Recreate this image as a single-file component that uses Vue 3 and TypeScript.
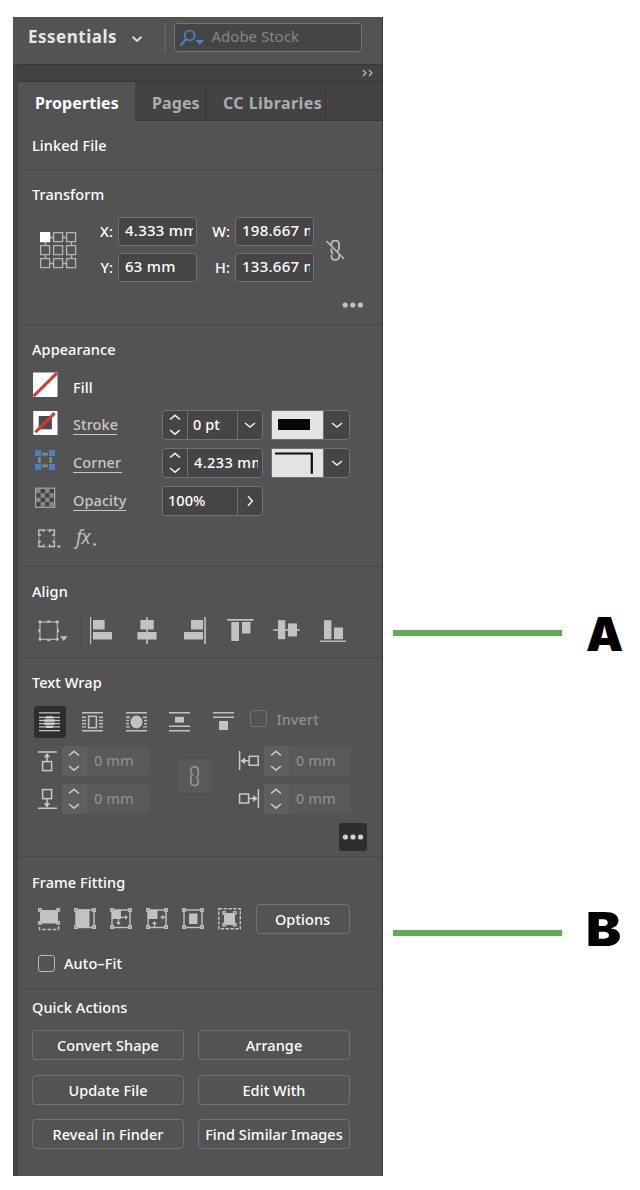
<script setup lang="ts">
interface Segment { x: number; y: number; w: number; h: number }
interface AlignIcon { id: string; box: string; rects: Segment[] }

const refCols: number[] = [0.5, 13.5, 26.5]
const refRows: number[] = [0.5, 13.5, 26.5]
const checks: number[] = [0, 1, 2, 3]

const alignIcons: AlignIcon[] = [
  { id: 'left', box: '87 616 28 30', rects: [{ x: 90, y: 617, w: 1.2, h: 27 }, { x: 93, y: 620, w: 11.6, h: 9.5 }, { x: 93, y: 632, w: 19, h: 7.5 }] },
  { id: 'center', box: '133 616 28 30', rects: [{ x: 146.2, y: 617, w: 1.6, h: 27 }, { x: 140.4, y: 620, w: 13.4, h: 9.5 }, { x: 137.4, y: 632, w: 19.2, h: 7.5 }] },
  { id: 'right', box: '180 616 28 30', rects: [{ x: 204.2, y: 617, w: 1.6, h: 27 }, { x: 191, y: 620, w: 12, h: 9.5 }, { x: 184, y: 632, w: 19, h: 7.5 }] },
  { id: 'top', box: '226 616 28 30', rects: [{ x: 227, y: 619, w: 26.5, h: 1.7 }, { x: 231.3, y: 622, w: 7.7, h: 19 }, { x: 242, y: 622, w: 8.5, h: 11.5 }] },
  { id: 'middle', box: '273 616 28 30', rects: [{ x: 273.2, y: 629.2, w: 26.5, h: 1.6 }, { x: 278, y: 620.2, w: 7.2, h: 19 }, { x: 288, y: 623.4, w: 9, h: 13 }] },
  { id: 'bottom', box: '319 616 28 30', rects: [{ x: 320, y: 640.5, w: 26, h: 1.4 }, { x: 324, y: 620.2, w: 7.4, h: 19 }, { x: 334, y: 627.5, w: 9, h: 11.7 }] },
]

const actions: string[] = ['Convert Shape', 'Arrange', 'Update File', 'Edit With', 'Reveal in Finder', 'Find Similar Images']
const corners: number[][] = [[1, 1], [19, 1], [1, 18], [19, 18]]
</script>

<template>
  <div class="page">
    <div class="panel">
      <header class="topbar">
        <span class="workspace">Essentials</span>
        <svg class="ws-chev" width="12" height="8" viewBox="0 0 12 8"><path d="M1.5 1.8 6 5.9l4.5-4.1" fill="none" stroke="#dcdcdc" stroke-width="1.9" /></svg>
        <i class="vline"></i>
        <div class="search">
          <svg width="26" height="18" viewBox="179 28 26 18"><circle cx="189.7" cy="34.4" r="4.9" fill="none" stroke="#4a83cb" stroke-width="1.7" /><path d="m186.3 38-6 6.5" stroke="#4a83cb" stroke-width="2" /><path d="M195.3 39h9l-4.5 4.7z" fill="#4a83cb" /></svg>
          <span>Adobe Stock</span>
        </div>
      </header>
      <div class="body">
        <div class="strip"><svg width="11" height="8" viewBox="0 0 11 8"><path d="m1 1 3 3-3 3M7 1l3 3-3 3" fill="none" stroke="#c6c6c6" stroke-width="1.1" /></svg></div>
        <nav class="tabs">
          <span class="tab t1">Properties</span><span class="tab t2">Pages</span><span class="tab t3">CC Libraries</span><span class="tab t4"></span>
        </nav>

        <section class="linked"><h2>Linked File</h2></section>

        <section class="transform">
          <h2>Transform</h2>
          <div class="tf-row">
            <svg class="ref" width="37" height="38" viewBox="0 0 37 38">
              <path d="M10 5.5h4M23 5.5h4M10 31.5h4M23 31.5h4M5.5 10v4M5.5 23v4M31.5 10v4M31.5 23v4" stroke="#b5b5b5" stroke-width="1.3" />
              <template v-for="(y, r) in refRows" :key="y">
                <rect v-for="(x, c) in refCols" :key="x" :x="x + 0.1" :y="y + 0.1" width="9" height="9" :fill="r + c === 0 ? '#fff' : 'none'" :stroke="r + c === 0 ? '#fff' : '#b5b5b5'" stroke-width="1.3" />
              </template>
            </svg>
            <div class="tf-grid">
              <label>X:</label><div class="field"><span>4.333 mm</span></div><label class="l2">W:</label><div class="field"><span>198.667 mm</span></div>
              <label>Y:</label><div class="field"><span>63 mm</span></div><label class="l2">H:</label><div class="field"><span>133.667 mm</span></div>
            </div>
            <svg class="unlink" width="20" height="22" viewBox="325 239 20 22"><path d="M331.5 245.3v-1.5c0-4.2 7.5-4.2 7.5 0v4.7c0 1.6-.8 2.3-1.8 2.6M331.5 248.6v3.2c0 1 .7 1.8 1.6 2.2M331.5 254.9v1.9c0 4.2 7.5 4.2 7.5 0v-2" fill="none" stroke="#bcbcbc" stroke-width="1.8" /><path d="m326.5 241 17.5 18" stroke="#c0c0c0" stroke-width="1.5" /></svg>
          </div>
          <svg class="dots" width="22" height="6" viewBox="0 0 22 6"><circle v-for="x in [3.2, 10.8, 18.4]" :key="x" :cx="x" cy="3" r="2.6" fill="#c2c2c2" /></svg>
        </section>

        <section class="appearance">
          <h2>Appearance</h2>
          <div class="ap-row">
            <svg class="ap-ico" width="28" height="30" viewBox="31 370 28 30"><rect x="33" y="372.5" width="24.5" height="24.5" fill="#fff" /><path d="m33.5 396.3 23.4-23.2" stroke="#dc3533" stroke-width="3" /></svg>
            <span class="name">Fill</span>
          </div>
          <div class="ap-row">
            <svg class="ap-ico" width="28" height="30" viewBox="31 408 28 30"><rect x="33.3" y="411" width="24.2" height="24" fill="#fff" /><rect x="38.7" y="416" width="13.2" height="13.3" fill="#4c4c4c" /><path d="m35.3 432.3 19.4-19.2" stroke="#dc3533" stroke-width="3" /></svg>
            <span class="name link n-stroke">Stroke</span>
            <div class="combo c1">
              <div class="spin"><svg width="12" height="22" viewBox="0 0 12 22"><path d="m1 5.5 5-4.2 5 4.2M1 16l5 4.2L11 16" fill="none" stroke="#ededed" stroke-width="1.6" /></svg></div>
              <div class="val">0 pt</div>
              <div class="drop"><svg width="12" height="8" viewBox="0 0 12 8"><path d="m1 2 5 4 5-4" fill="none" stroke="#ededed" stroke-width="1.6" /></svg></div>
            </div>
            <div class="combo c2"><div class="swatch"><i class="solid"></i></div><div class="drop"><svg width="12" height="8" viewBox="0 0 12 8"><path d="m1 2 5 4 5-4" fill="none" stroke="#ededed" stroke-width="1.6" /></svg></div></div>
          </div>
          <div class="ap-row">
            <svg class="ap-ico" width="28" height="30" viewBox="31 445 28 30"><g fill="#4d80c4"><rect x="35" y="450" width="6" height="6" /><rect x="49" y="450" width="6" height="6" /><rect x="35" y="464" width="6" height="6" /><rect x="49" y="464" width="6" height="6" /></g><path d="M42 454.1h6M42 465.9h6M39.4 457v6M50.7 457v6" stroke="#858585" stroke-width="2.7" /></svg>
            <span class="name link n-corner">Corner</span>
            <div class="combo c1">
              <div class="spin"><svg width="12" height="22" viewBox="0 0 12 22"><path d="m1 5.5 5-4.2 5 4.2M1 16l5 4.2L11 16" fill="none" stroke="#ededed" stroke-width="1.6" /></svg></div>
              <div class="val wide"><span>4.233 mm</span></div>
            </div>
            <div class="combo c2"><div class="swatch"><svg width="51" height="27" viewBox="0 0 51 27"><path d="M3 4.5h36.8v20.2" fill="none" stroke="#0a0b0a" stroke-width="2.2" /></svg></div><div class="drop"><svg width="12" height="8" viewBox="0 0 12 8"><path d="m1 2 5 4 5-4" fill="none" stroke="#ededed" stroke-width="1.6" /></svg></div></div>
          </div>
          <div class="ap-row">
            <svg class="ap-ico" width="28" height="30" viewBox="31 483 28 30"><rect x="35.6" y="488.2" width="19" height="19" fill="#454545" stroke="#aaa" stroke-width="1.2" /><template v-for="r in checks" :key="r"><template v-for="c in checks" :key="c"><rect v-if="(r + c) % 2 === 0" :x="36.2 + c * 4.4" :y="488.8 + r * 4.4" width="4.4" height="4.4" fill="#888" /></template></template></svg>
            <span class="name link n-opacity">Opacity</span>
            <div class="combo c1 opacity"><div class="val pct">100%</div><div class="drop"><svg width="8" height="12" viewBox="0 0 8 12"><path d="m2 1.2 4.3 4.8L2 10.8" fill="none" stroke="#ededed" stroke-width="1.6" /></svg></div></div>
          </div>
          <div class="fxrow">
            <svg width="26" height="24" viewBox="37 526 26 24"><rect x="38.8" y="530" width="15.6" height="16.6" fill="none" stroke="#c4c4c4" stroke-width="1.4" /><path d="M43.6 530v2M49.6 530v2M43.6 544.6v2M49.6 544.6v2M39 535h2M39 541.5h2M52.2 535h2M52.2 541.5h2" stroke="#c4c4c4" stroke-width="1.5" /><path d="M38.8 536v4.5M54.4 536v4.5M44.6 530h4M44.6 546.6h4" stroke="#6a6a6a" stroke-width="1.4" /><path d="M56.7 545.5h4.4l-2.2 2.7z" fill="#c4c4c4" /></svg>
            <em>fx</em>
            <svg width="6" height="4" viewBox="0 0 6 4"><path d="M.5.5h4.4L2.7 3.2z" fill="#c4c4c4" /></svg>
          </div>
        </section>

        <section class="align">
          <h2>Align</h2>
          <div class="al-row">
            <svg width="34" height="30" viewBox="37 616 34 30"><rect x="41" y="622" width="17.3" height="17.3" fill="none" stroke="#bdbdbd" stroke-width="1.1" /><path d="M39.5 622h3M56.8 622h3M39.5 639.3h3M56.8 639.3h3M41 620.4v3M58.3 620.4v3M41 637.8v3M58.3 637.8v3M48 621.5h3.2M48 640h3.2M40.3 629v3.2M59 629v3.2" stroke="#c2c2c2" stroke-width="1.8" /><path d="M61.2 636.2h7.3l-3.7 4.7z" fill="#c2c2c2" /></svg>
            <i class="al-sep"></i>
            <svg v-for="icon in alignIcons" :key="icon.id" class="al-ico" width="28" height="30" :viewBox="icon.box"><rect v-for="(s, i) in icon.rects" :key="i" :x="s.x" :y="s.y" :width="s.w" :height="s.h" fill="#c2c2c2" /></svg>
          </div>
        </section>

        <section class="wrap">
          <h2>Text Wrap</h2>
          <div class="wr-row">
            <div class="wr on"><svg width="21" height="22" viewBox="0 0 21 22"><path d="M0 1.8h21M0 6.3h21M0 9.5h21M0 12.7h21M0 15.9h21M0 19.7h21" stroke="#c9c9c9" stroke-width="1.3" /><ellipse cx="10.5" cy="11" rx="5.5" ry="6.2" fill="#c9c9c9" opacity=".35" /><path d="M7 6.3h7M5.5 9.5h10M5.5 12.7h10M7 15.9h7" stroke="#d2d2d2" stroke-width="2" /></svg></div>
            <div class="wr"><svg width="21" height="22" viewBox="0 0 21 22"><path d="M0 1.8h21M0 19.7h21M0 6.3h4M0 9.5h4M0 12.7h4M0 15.9h4M17 6.3h4M17 9.5h4M17 12.7h4M17 15.9h4" stroke="#c2c2c2" stroke-width="1.4" /><rect x="6.6" y="5.3" width="7.8" height="11.4" fill="none" stroke="#c2c2c2" stroke-width="1.5" /></svg></div>
            <div class="wr"><svg width="21" height="22" viewBox="0 0 21 22"><path d="M0 1.8h21M0 19.7h21M0 6.3h4M0 9.5h3M0 12.7h3M0 15.9h4M17 6.3h4M18 9.5h3M18 12.7h3M17 15.9h4" stroke="#c2c2c2" stroke-width="1.4" /><ellipse cx="10.5" cy="11" rx="6" ry="6.5" fill="#c2c2c2" /></svg></div>
            <div class="wr"><svg width="21" height="22" viewBox="0 0 21 22"><path d="M0 1.8h21M0 15.2h21M0 19.7h21" stroke="#c2c2c2" stroke-width="1.4" /><rect x="6" y="5.8" width="9" height="5.8" fill="#c2c2c2" /></svg></div>
            <div class="wr"><svg width="21" height="22" viewBox="0 0 21 22"><path d="M0 1.8h21M0 6.3h21" stroke="#c2c2c2" stroke-width="1.4" /><rect x="6" y="10" width="9" height="9" fill="#c2c2c2" /></svg></div>
            <i class="box dim"></i><span class="invert">Invert</span>
          </div>
          <div class="offsets">
            <div class="col">
              <div class="off"><svg width="21" height="24" viewBox="37 749 21 24"><path d="M38 752h19M47 762v-8" stroke="#c9c9c9" stroke-width="1.5" /><path d="M43.8 757.2h6.4L47 753z" fill="#c9c9c9" /><rect x="42.6" y="761.6" width="9" height="9" fill="none" stroke="#c9c9c9" stroke-width="1.5" /></svg><div class="mm"><div class="spin2"><svg width="12" height="22" viewBox="0 0 12 22"><path d="m1 5.5 5-4.2 5 4.2M1 16l5 4.2L11 16" fill="none" stroke="#c8c8c8" stroke-width="1.6" /></svg></div><span>0 mm</span></div></div>
              <div class="off"><svg width="21" height="24" viewBox="37 787 21 24"><path d="M38 808.3h19M47 799v8" stroke="#c9c9c9" stroke-width="1.5" /><path d="M43.8 803.2h6.4L47 807.4z" fill="#c9c9c9" /><rect x="42.6" y="789.6" width="9" height="9" fill="none" stroke="#c9c9c9" stroke-width="1.5" /></svg><div class="mm"><div class="spin2"><svg width="12" height="22" viewBox="0 0 12 22"><path d="m1 5.5 5-4.2 5 4.2M1 16l5 4.2L11 16" fill="none" stroke="#c8c8c8" stroke-width="1.6" /></svg></div><span>0 mm</span></div></div>
            </div>
            <div class="chain"><svg width="11" height="22" viewBox="0 0 11 22"><path d="M1.8 8.5V5.4c0-5 7.4-5 7.4 0v4.4c0 2-1.2 2.7-2.5 3M9.2 13.5v3.3c0 5-7.4 5-7.4 0v-4.4c0-2 1.2-2.7 2.5-3" fill="none" stroke="#929292" stroke-width="1.8" /></svg></div>
            <div class="col right">
              <div class="off"><svg width="22" height="24" viewBox="238 749 22 24"><path d="M239.6 751v19M241 760.8h8" stroke="#c9c9c9" stroke-width="1.5" /><path d="M245 757.4v6.8l-4.4-3.4z" fill="#c9c9c9" /><rect x="249.2" y="756.3" width="9" height="9" fill="none" stroke="#c9c9c9" stroke-width="1.5" /></svg><div class="mm"><div class="spin2"><svg width="12" height="22" viewBox="0 0 12 22"><path d="m1 5.5 5-4.2 5 4.2M1 16l5 4.2L11 16" fill="none" stroke="#c8c8c8" stroke-width="1.6" /></svg></div><span>0 mm</span></div></div>
              <div class="off"><svg width="22" height="24" viewBox="238 787 22 24"><path d="M258.4 789v19M249 798.5h8" stroke="#c9c9c9" stroke-width="1.5" /><path d="M253 795.1v6.8l4.4-3.4z" fill="#c9c9c9" /><rect x="239.6" y="794" width="9" height="9" fill="none" stroke="#c9c9c9" stroke-width="1.5" /></svg><div class="mm"><div class="spin2"><svg width="12" height="22" viewBox="0 0 12 22"><path d="m1 5.5 5-4.2 5 4.2M1 16l5 4.2L11 16" fill="none" stroke="#c8c8c8" stroke-width="1.6" /></svg></div><span>0 mm</span></div></div>
            </div>
          </div>
          <div class="more"><svg width="22" height="6" viewBox="0 0 22 6"><circle v-for="x in [3.4, 11, 18.6]" :key="x" :cx="x" cy="3" r="2.6" fill="#d2d2d2" /></svg></div>
        </section>

        <section class="fitting">
          <h2>Frame Fitting</h2>
          <div class="ff-row">
            <svg width="24" height="24" viewBox="-1 -1 24 24"><rect x="2" y="2" width="18" height="13.5" fill="#c2c2c2" /><path d="M1.5 19v2.5h19V18" fill="none" stroke="#c2c2c2" stroke-width="1.5" stroke-dasharray="3.5 1.8" /><g fill="#555" stroke="#c2c2c2" stroke-width="1.4"><rect x=".7" y=".7" width="2.4" height="2.4" /><rect x="19" y=".7" width="2.4" height="2.4" /><rect x=".7" y="13.7" width="2.4" height="2.4" /><rect x="19" y="13.7" width="2.4" height="2.4" /></g></svg>
            <svg width="24" height="24" viewBox="-1 -1 24 24"><rect x="2" y="2" width="18" height="17.5" fill="none" stroke="#c2c2c2" stroke-width="1.4" /><path d="M4 1.5h11.5V20H4l-2-2V3z" fill="#c2c2c2" /><g fill="#555" stroke="#c2c2c2" stroke-width="1.4"><rect v-for="(p, i) in corners" :key="i" :x="p[0] - .2" :y="p[1] - .2" width="2.5" height="2.5" /></g></svg>
            <svg width="24" height="24" viewBox="-1 -1 24 24"><rect x="2" y="2" width="18" height="17.5" fill="none" stroke="#c2c2c2" stroke-width="1.4" /><path d="M2 2h9v9H2z" fill="#c2c2c2" /><path d="M11 9.3h5M8.5 11v4.5" stroke="#c2c2c2" stroke-width="1.3" /><path d="m15 6.8 3 2.5-3 2.5zM6 14.2l2.5 3 2.5-3z" fill="#c2c2c2" /><g fill="#555" stroke="#c2c2c2" stroke-width="1.4"><rect v-for="(p, i) in corners" :key="i" :x="p[0] - .2" :y="p[1] - .2" width="2.5" height="2.5" /></g></svg>
            <svg width="24" height="24" viewBox="-1 -1 24 24"><rect x="2" y="2" width="18" height="17.5" fill="none" stroke="#c2c2c2" stroke-width="1.4" /><path d="M2 2h9.5v9H2z" fill="#c2c2c2" /><path d="M16 9.3h4M8.5 15v4" stroke="#c2c2c2" stroke-width="1.3" /><path d="m17.3 6.8-3 2.5 3 2.5zM6 16l2.5-3 2.5 3z" fill="#c2c2c2" /><g fill="#555" stroke="#c2c2c2" stroke-width="1.4"><rect v-for="(p, i) in corners" :key="i" :x="p[0] - .2" :y="p[1] - .2" width="2.5" height="2.5" /></g></svg>
            <svg width="24" height="24" viewBox="-1 -1 24 24"><rect x="2" y="2" width="18" height="17.5" fill="none" stroke="#c2c2c2" stroke-width="1.4" /><rect x="7" y="5.5" width="8.5" height="10.5" fill="#c2c2c2" /><g fill="#555" stroke="#c2c2c2" stroke-width="1.4"><rect v-for="(p, i) in corners" :key="i" :x="p[0] - .2" :y="p[1] - .2" width="2.5" height="2.5" /></g></svg>
            <svg width="24" height="24" viewBox="-1 -1 24 24"><rect x=".8" y=".8" width="21.5" height="20" fill="none" stroke="#c2c2c2" stroke-width="1.4" stroke-dasharray="3.4 1.4" /><rect x="6" y="5" width="11" height="12" fill="#c2c2c2" /><g fill="#555" stroke="#c2c2c2" stroke-width="1.3"><rect x="5" y="3.7" width="2.4" height="2.4" /><rect x="15.6" y="3.7" width="2.4" height="2.4" /><rect x="5" y="15.5" width="2.4" height="2.4" /><rect x="15.6" y="15.5" width="2.4" height="2.4" /></g></svg>
            <button class="btn options" type="button">Options</button>
          </div>
          <div class="auto"><i class="box"></i><span>Auto–Fit</span></div>
        </section>

        <section class="quick">
          <h2>Quick Actions</h2>
          <div class="actions"><button v-for="a in actions" :key="a" class="btn" type="button">{{ a }}</button></div>
        </section>
      </div>
    </div>
    <aside class="callouts">
      <div class="callout a"><i></i><b>A</b></div>
      <div class="callout b"><i></i><b>B</b></div>
    </aside>
  </div>
</template>

<style>
body { background: #fff; }
</style>

<style scoped>
* { box-sizing: border-box; }
.page { display: flex; width: 640px; height: 1190px; padding: 17px 0 0 13px; overflow: hidden; background: #fff; font-family: "Noto Sans", "Open Sans", sans-serif; font-size: 14.5px; font-weight: 500; letter-spacing: .08px; color: #fff; white-space: nowrap; }
svg { display: block; flex: none; }
.panel { width: 370px; height: 1159px; flex: none; background: #535353; border-right: 1px solid #3b3b3b; }
.topbar { display: flex; align-items: center; height: 47px; padding-left: 15px; padding-bottom: 6px; }
.workspace { width: 103px; margin-top: -2px; font-size: 17px; font-weight: 700; color: #e6e6e6; letter-spacing: .5px; }
.ws-chev { margin-top: 3px; }
.vline { width: 2px; height: 29px; margin-left: 21px; background: #606060; }
.search { display: flex; align-items: center; width: 188px; height: 29px; margin-left: 8px; padding-left: 4px; border: 1px solid #757575; border-radius: 3px; background: #454545; color: #858585; font-size: 15px; }
.search span { margin: -3px 0 0 6.5px; font-weight: 400; letter-spacing: 0; }
.body { border-left: 5px solid #434343; height: 1112px; }
.strip { display: flex; justify-content: flex-end; align-items: center; height: 18px; padding-right: 9px; background: #424242; border-top: 1px solid #383838; border-bottom: 1px solid #383838; }
.tabs { display: flex; height: 39px; background: #434343; border-bottom: 1px solid #383838; font-size: 16px; font-weight: 700; letter-spacing: .1px; color: #adadad; line-height: 43px; }
.tab { border-right: 1px solid #393939; height: 38px; flex: none; }
.t1 { width: 117px; height: 39px; padding-left: 17px; background: #535353; color: #fff; border-right: 0; }
.t2 { width: 72px; padding-left: 17px; }
.t3 { width: 119px; padding-left: 16px; letter-spacing: .42px; }
.t4 { border: 0; }
section { border-bottom: 1px solid #494949; padding-left: 14px; overflow: hidden; }
h2 { margin: 0; height: 20px; line-height: 20px; font-size: 14.5px; font-weight: 500; letter-spacing: .08px; }
.linked { height: 49px; padding-top: 14px; }
.transform { height: 155px; padding-top: 14px; }
.tf-row { display: flex; margin-top: 13px; height: 65px; }
.ref { margin: 15px 0 0 8px; }
.tf-grid { display: grid; grid-template-columns: 41px 79px 38px 79px; row-gap: 7px; }
.tf-grid label { text-align: right; padding-right: 5px; line-height: 28px; }
.field { height: 29px; padding: 0 3px 0 6px; border: 1px solid #717171; border-radius: 3px; background: #454545; line-height: 25px; }
.field span { display: block; overflow: hidden; font-size: 15px; letter-spacing: .25px; }
.unlink { margin: 22px 0 0 11px; }
.dots { margin: 20px 0 0 310px; }
.appearance { height: 242px; padding-top: 14px; }
.ap-row { display: flex; height: 37.6px; align-items: center; margin-left: -1px; }
h2 + .ap-row { margin-top: 10px; }
.ap-ico { margin-top: -5px; }
.name { margin-left: 14px; line-height: 19px; }
.link { flex: none; color: #c8c8c8; border-bottom: 1.4px solid #c8c8c8; height: 20px; }
.n-stroke { margin-right: 45px; width: 44px; }
.n-corner { margin-right: 40px; width: 49px; }
.n-opacity { margin-right: 36px; width: 53px; }
.combo { display: flex; flex: none; height: 30px; border: 1.5px solid #717171; border-radius: 4px; background: #454545; overflow: hidden; }
.c1 { width: 101px; }
.c2 { width: 79px; margin-left: 8px; border-radius: 1px 4px 4px 1px; }
.spin { width: 25px; padding: 3px 0 0 6px; border-right: 1px solid #717171; }
.val { width: 49px; padding-left: 5px; line-height: 27px; }
.wide { width: 73px; padding: 0 3px 0 6px; }
.wide span { display: block; overflow: hidden; letter-spacing: .4px; }
.pct { width: 74px; }
.drop { flex: 1; display: flex; align-items: center; justify-content: center; border-left: 1px solid #717171; }
.swatch { width: 51px; background: #e2e4e3; }
.solid { display: block; width: 32px; height: 11px; margin: 8px 0 0 6px; background: #050605; }
.opacity { border-radius: 1px 4px 4px 1px; }
.fxrow { display: flex; align-items: flex-end; margin: 5px 0 0 5px; height: 26px; color: #bdbdbd; }
.fxrow em { width: 16px; margin-left: 13px; font-size: 19px; font-weight: 400; line-height: 26px; letter-spacing: -.5px; }
.fxrow svg:last-child { margin-bottom: 3px; }
.align { height: 91px; padding-top: 14px; }
.al-row { display: flex; margin: 12px 0 0 4px; height: 36px; align-items: center; }
.al-sep { width: 1px; height: 35px; margin-left: 10px; background: #4a4a4a; }
.al-ico { margin-left: 18.4px; }
.al-sep + .al-ico { margin-left: 6px; }
.wrap { height: 199px; padding-top: 14px; }
.wr-row { display: flex; align-items: center; height: 32px; margin: 14px 0 0 1.5px; }
.wr { display: flex; align-items: center; justify-content: center; width: 32px; height: 32px; margin-right: 11.4px; border-radius: 3px; }
.on { background: #2e2e2e; }
.box { display: block; flex: none; width: 17px; height: 17px; border: 1.5px solid #b8b8b8; border-radius: 3px; }
.dim { border-color: #737373; margin: -7px 0 0 0; }
.invert { color: #8f8f8f; margin: -7px 0 0 9px; }
.offsets { display: flex; margin: 8px 0 0 5px; height: 69px; }
.off { display: flex; align-items: center; height: 30px; margin-bottom: 8px; }
.mm { display: flex; width: 87px; height: 30px; margin-left: 4px; border-radius: 3px; background: #595959; color: #8b8b8b; overflow: hidden; line-height: 29px; font-size: 14.5px; }
.spin2 { width: 25px; padding: 4px 0 0 6px; background: #5f5f5f; }
.mm span { margin-left: 7px; }
.chain { display: flex; width: 35px; height: 34px; align-items: center; justify-content: center; margin: 13px 0 0 28px; border-radius: 4px; background: #595959; }
.right { margin-left: 26px; }
.more { display: flex; align-items: center; justify-content: center; width: 28px; height: 28px; margin: 8px 0 0 306.5px; border-radius: 3px; background: #2e2e2e; }
.fitting { height: 133px; padding-top: 15px; }
.ff-row { display: flex; align-items: center; height: 30px; margin: 12px 0 0 5px; gap: 12.1px; }
.btn { height: 30px; padding: 0; border: 1.5px solid #727272; border-radius: 4px; background: transparent; color: #fff; font: 500 14.5px "Noto Sans", "Open Sans", sans-serif; letter-spacing: .06px; }
.options { width: 94px; margin-left: 2px; }
.auto { display: flex; align-items: center; margin: 19px 0 0 6px; height: 20px; }
.auto span { margin-left: 9px; }
.quick { border-bottom: 0; padding-top: 7px; }
.actions { display: grid; grid-template-columns: 152px 152px; gap: 14.6px 14px; margin-top: 13px; }
.callouts { width: 250px; padding-left: 10px; }
.callout { display: flex; align-items: center; height: 60px; }
.callout i { display: block; width: 169px; height: 6px; background: #5fad53; }
.callout b { font-family: Inter, sans-serif; font-weight: 900; font-size: 47px; line-height: 60px; letter-spacing: 0; color: #000; margin: 1px 0 0 24px; }
.a { margin-top: 586px; }
.b { margin-top: 240px; }
.callout.b b { margin: -9px 0 0 24px; transform: scaleX(1.12); transform-origin: left center; }
</style>
